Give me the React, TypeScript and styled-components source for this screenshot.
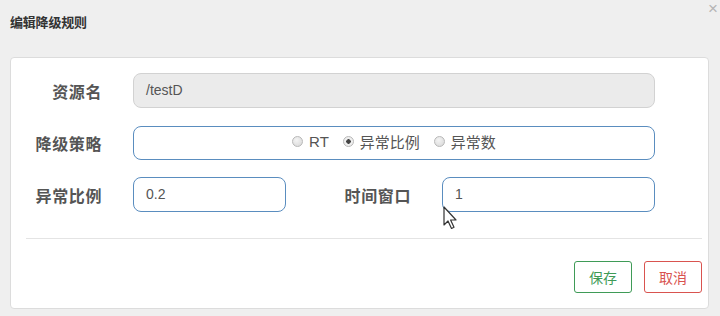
import styled, { createGlobalStyle } from "styled-components"

const GlobalStyle = createGlobalStyle`
  html, body {
    margin: 0;
    padding: 0;
    background: #efefef;
  }
  body {
    font-family: "Liberation Sans", "Noto Sans CJK SC", sans-serif;
    color: #555;
  }
`

interface IRadio {
  label: string
  checked?: boolean
}

const Radio = (props: IRadio) => {
  return (
    <RadioItem>
      <RadioDot checked={!!props.checked} />
      {props.label}
    </RadioItem>
  )
}

const App = () => {
  return (
    <Page>
      <GlobalStyle />
      <Header>
        <Title>编辑降级规则</Title>
        <Close>×</Close>
      </Header>
      <Card>
        <FormRow>
          <Label>资源名</Label>
          <Input disabled>/testD</Input>
        </FormRow>
        <FormRow>
          <Label>降级策略</Label>
          <RadioBox>
            <Radio label="RT" />
            <Radio label="异常比例" checked />
            <Radio label="异常数" />
          </RadioBox>
        </FormRow>
        <SplitRow>
          <Label>异常比例</Label>
          <Input>0.2</Input>
          <Label>时间窗口</Label>
          <Input>
            1
            <Cursor width="16" height="24" viewBox="0 0 16 24">
              <path d="M1 1 L1 19 L5 15 L8.5 22.5 L11 21.3 L7.6 14 L13 14 Z" fill="#fff" stroke="#333" strokeWidth="1.2" strokeLinejoin="round" />
            </Cursor>
          </Input>
        </SplitRow>
        <Divider />
        <Footer>
          <Button tone="#3f9b57">保存</Button>
          <Button tone="#d9534f">取消</Button>
        </Footer>
      </Card>
    </Page>
  )
}

const Page = styled.div`
  width: 720px;
  height: 316px;
  padding: 0 10px;
  box-sizing: border-box;
  position: relative;
  overflow: hidden;
`
const Header = styled.div`
  height: 57px;
  display: flex;
  align-items: center;
  padding-bottom: 14px;
  box-sizing: border-box;
`
const Title = styled.div`
  font-size: 13px;
  font-weight: 700;
  color: #333;
  letter-spacing: -0.2px;
`
const Close = styled.div`
  position: absolute;
  top: 0;
  right: 2px;
  font-size: 17px;
  line-height: 17px;
  color: #b5b5b5;
`
const Card = styled.div`
  width: 699px;
  height: 252px;
  box-sizing: border-box;
  background: #fff;
  border: 1px solid #dcdcdc;
  border-radius: 4px;
  padding: 15px 53px 0 0;
  display: flex;
  flex-direction: column;
  gap: 17px;
`
const FormRow = styled.div`
  display: grid;
  grid-template-columns: 122px 1fr;
  align-items: center;
  height: 35px;
`
const SplitRow = styled(FormRow)`
  grid-template-columns: 122px 153px 156px 1fr;
`
const Label = styled.div`
  text-align: right;
  padding-right: 31px;
  font-size: 16px;
  font-weight: 700;
  color: #555;
  letter-spacing: 0.6px;
`
const Input = styled.div<{ disabled?: boolean }>`
  position: relative;
  height: 35px;
  box-sizing: border-box;
  display: flex;
  align-items: center;
  padding: 0 12px 2px;
  font-size: 14px;
  color: #555;
  border-radius: 8px;
  border: 1px solid ${({ disabled }) => (disabled ? "#d2d2d2" : "#5a8dbf")};
  background: ${({ disabled }) => (disabled ? "#ebebeb" : "#fff")};
`
const RadioBox = styled(Input)`
  justify-content: center;
  gap: 14px;
  height: 34px;
`
const RadioItem = styled.span`
  display: inline-flex;
  align-items: center;
  gap: 6px;
  font-size: 15px;
  color: #555;
`
const RadioDot = styled.span<{ checked: boolean }>`
  width: 9px;
  height: 9px;
  border-radius: 50%;
  border: 1px solid #b8b8b8;
  background: ${({ checked }) =>
    checked
      ? "radial-gradient(circle, #444 0 2px, #eee 2.5px)"
      : "radial-gradient(circle at 40% 35%, #f4f4f4, #d6d6d6)"};
`
const Cursor = styled.svg`
  position: absolute;
  left: 0;
  top: 28px;
`
const Divider = styled.div`
  height: 1px;
  background: #e4e4e4;
  margin: 9px -47px 0 15px;
`
const Footer = styled.div`
  display: flex;
  justify-content: flex-end;
  gap: 12px;
  margin-right: -47px;
  margin-top: 5px;
`
const Button = styled.div<{ tone: string }>`
  height: 32px;
  padding: 0 14px;
  display: flex;
  align-items: center;
  box-sizing: border-box;
  border: 1px solid ${({ tone }) => tone};
  color: ${({ tone }) => tone};
  border-radius: 3px;
  font-size: 14px;
  background: #fff;
`

export default App
